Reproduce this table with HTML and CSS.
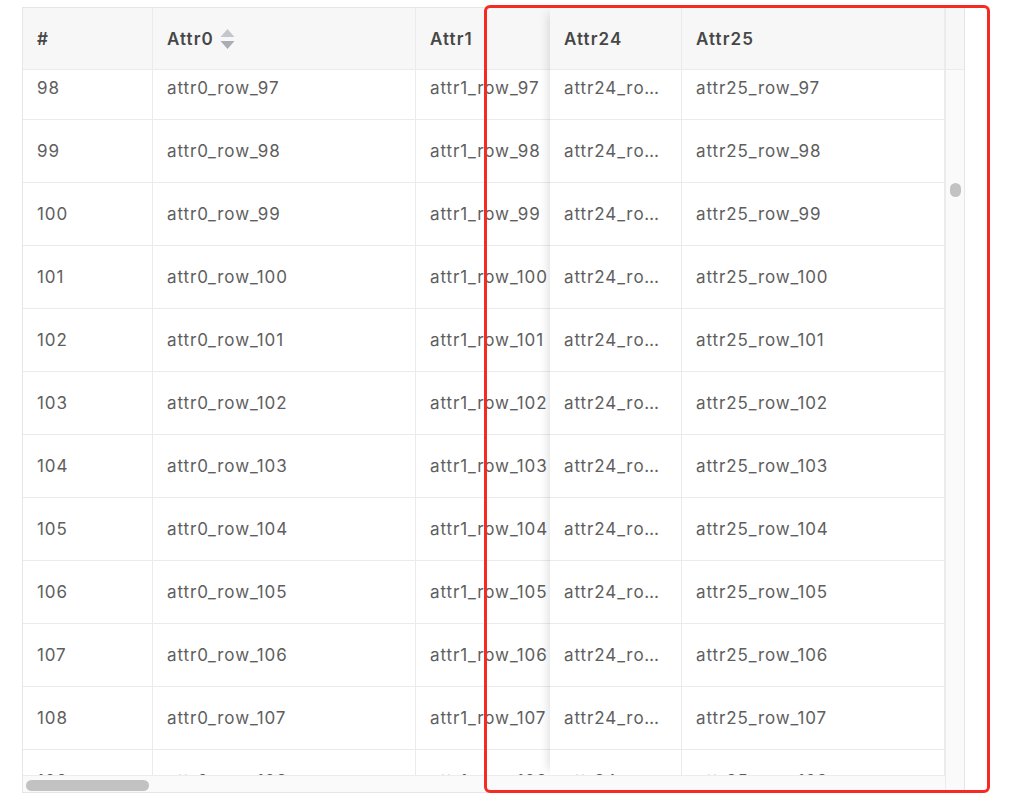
FILE: index.html
```html
<!DOCTYPE html>
<html>
<head>
<meta charset="utf-8">
<link rel="stylesheet" href="styles.css">
</head>
<body>
<div class="page">
  <div class="table">
    <div class="main">
      <div class="area">
        <div class="left-part">
          <div class="row head">
            <div class="cell c-idx">#</div>
            <div class="cell c-a0">Attr0
              <span class="sort">
                <svg width="15" height="21" viewBox="0 0 15 21"><path d="M7.5 0 L14.5 8 L0.5 8 Z" fill="#c3c6cc"/><path d="M0.5 12 L14.5 12 L7.5 20 Z" fill="#a9adb4"/></svg>
              </span>
            </div>
            <div class="cell c-a1">Attr1</div>
          </div>
          <div class="body">
            <div class="rows" id="left-rows"></div>
          </div>
        </div>
        <div class="right-part">
          <div class="row head">
            <div class="cell c-a24">Attr24</div>
            <div class="cell c-a25">Attr25</div>
          </div>
          <div class="body">
            <div class="rows" id="right-rows"></div>
          </div>
        </div>
      </div>
      <div class="hscroll"><div class="hthumb"></div></div>
    </div>
    <div class="gutter">
      <div class="gutter-head"></div>
      <div class="vtrack"><div class="vthumb"></div></div>
    </div>
  </div>
  <div class="highlight"></div>
</div>
<script src="script.js"></script>
</body>
</html>
```

FILE: script.js
```js
var left = document.getElementById('left-rows');
var right = document.getElementById('right-rows');
for (var n = 98; n <= 109; n++) {
  var r = n - 1;
  var l = document.createElement('div');
  l.className = 'row';
  l.innerHTML = '<div class="cell c-idx">' + n + '</div>' +
    '<div class="cell c-a0">attr0_row_' + r + '</div>' +
    '<div class="cell c-a1">attr1_row_' + r + '</div>';
  left.appendChild(l);
  var rr = document.createElement('div');
  rr.className = 'row';
  rr.innerHTML = '<div class="cell c-a24"><span class="ell">attr24_row_' + r + '</span></div>' +
    '<div class="cell c-a25">attr25_row_' + r + '</div>';
  right.appendChild(rr);
}
```

FILE: styles.css
```css
html, body {
  margin: 0;
  padding: 0;
  background: #ffffff;
}

.page {
  position: relative;
  width: 1024px;
  height: 812px;
  padding: 7px 0 0 22px;
  box-sizing: border-box;
  font-family: Inter, "Liberation Sans", sans-serif;
}

.table {
  display: flex;
  width: 943px;
  height: 786px;
  border: 1px solid #e6e6e6;
  box-sizing: border-box;
  overflow: hidden;
  background: #ffffff;
}

.main {
  width: 922px;
  display: flex;
  flex-direction: column;
}

.area {
  display: flex;
  height: 767px;
  overflow: hidden;
}

.left-part {
  width: 527px;
  overflow: hidden;
  flex: none;
}

.right-part {
  width: 395px;
  flex: none;
  position: relative;
  z-index: 2;
  background: #ffffff;
  box-shadow: -6px 0 10px -5px rgba(0, 0, 0, 0.15);
}

.row {
  display: flex;
  height: 63px;
  box-sizing: border-box;
  border-bottom: 1px solid #ebebeb;
  white-space: nowrap;
}

.row.head {
  height: 62px;
  background: #f7f7f8;
  font-weight: 600;
  color: #474747;
  letter-spacing: 1.1px;
}

.body {
  height: 705px;
  overflow: hidden;
}

.rows {
  margin-top: -13px;
  color: #5e5e5e;
  letter-spacing: 0.9px;
}

.cell {
  flex: none;
  display: flex;
  align-items: center;
  padding-left: 14px;
  box-sizing: border-box;
  border-right: 1px solid #ebebeb;
  font-size: 17px;
  overflow: hidden;
}

.c-idx { width: 130px; }
.c-a0 { width: 263px; }
.c-a1 { width: 263px; border-right: none; }
.c-a24 { width: 132px; padding-right: 14px; }
.c-a25 { width: 263px; }

.ell {
  display: block;
  overflow: hidden;
  text-overflow: ellipsis;
  white-space: nowrap;
}

.sort {
  display: inline-flex;
  margin-left: 6px;
  margin-top: 1px;
}

.hscroll {
  flex: 1;
  border-top: 1px solid #ececec;
  background: #fafafa;
  padding: 4px 0 0 3px;
  box-sizing: border-box;
}

.hthumb {
  width: 123px;
  height: 11px;
  border-radius: 6px;
  background: #c2c2c2;
}

.gutter {
  width: 19px;
  display: flex;
  flex-direction: column;
  border-left: 1px solid #ebebeb;
  box-sizing: border-box;
  flex: none;
}

.gutter-head {
  height: 62px;
  flex: none;
  background: #f7f7f8;
  border-bottom: 1px solid #ebebeb;
  box-sizing: border-box;
}

.vtrack {
  flex: 1;
  background: #fafafa;
  padding: 113px 0 0 4px;
  box-sizing: border-box;
}

.vthumb {
  width: 11px;
  height: 14px;
  border-radius: 6px;
  background: #c2c2c2;
}

.highlight {
  position: absolute;
  left: 484px;
  top: 5px;
  width: 506px;
  height: 788px;
  border: 3px solid #f52a22;
  border-radius: 6px;
  box-sizing: border-box;
}
```
